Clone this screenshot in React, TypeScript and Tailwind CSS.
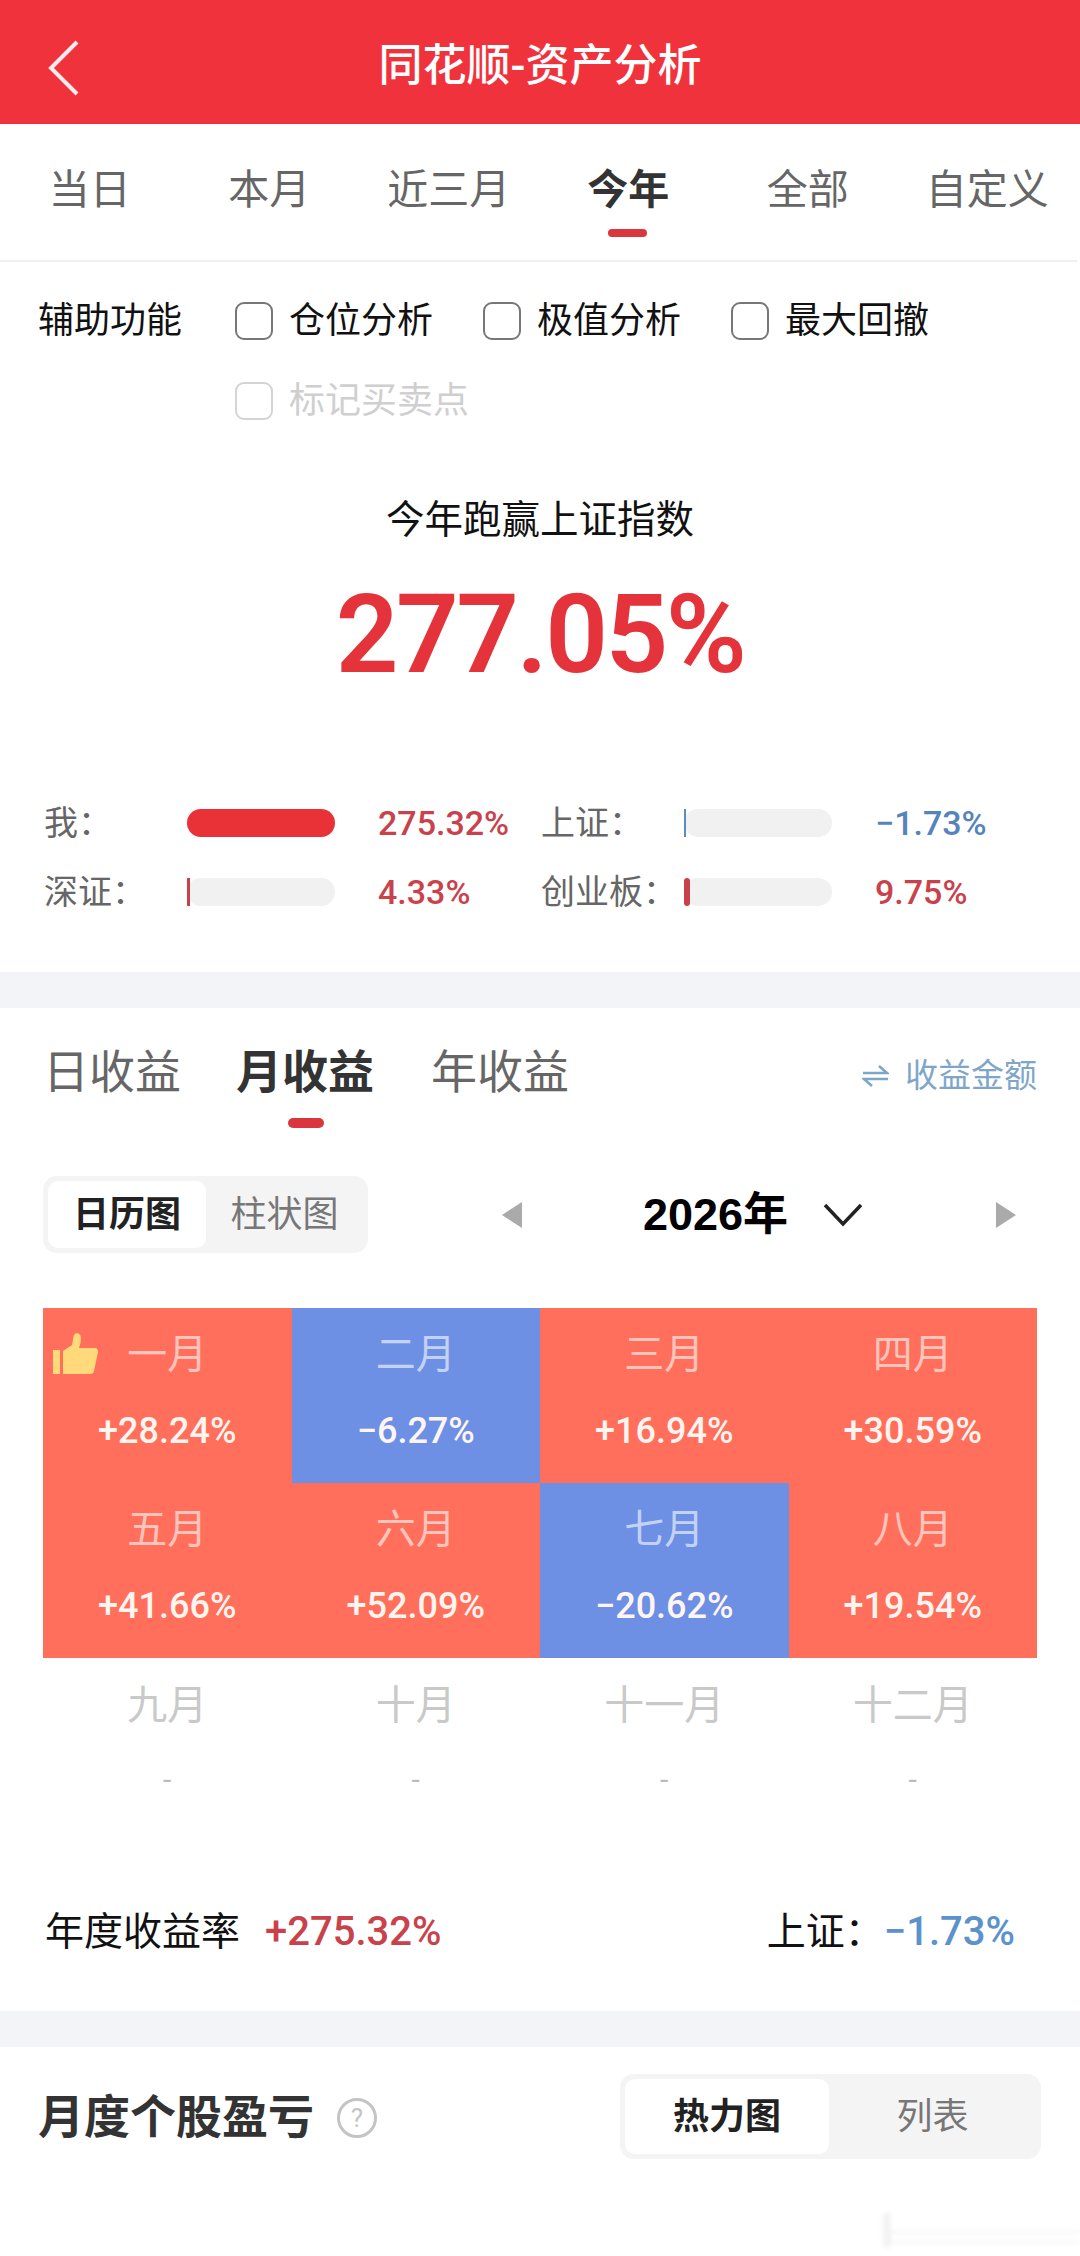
// @ts-nocheck
const font = 'font-["Roboto","Noto_Sans_CJK_SC",sans-serif]';

const periods = ['当日', '本月', '近三月', '今年', '全部', '自定义'];

const months = [
  { name: '一月', value: '+28.24%', tone: 'up', best: true },
  { name: '二月', value: '−6.27%', tone: 'down' },
  { name: '三月', value: '+16.94%', tone: 'up' },
  { name: '四月', value: '+30.59%', tone: 'up' },
  { name: '五月', value: '+41.66%', tone: 'up' },
  { name: '六月', value: '+52.09%', tone: 'up' },
  { name: '七月', value: '−20.62%', tone: 'down' },
  { name: '八月', value: '+19.54%', tone: 'up' },
  { name: '九月', value: '-', tone: 'none' },
  { name: '十月', value: '-', tone: 'none' },
  { name: '十一月', value: '-', tone: 'none' },
  { name: '十二月', value: '-', tone: 'none' },
];

function Check({ label, off }) {
  return (
    <div className="flex items-center gap-[16px]">
      <span className={`w-[38px] h-[38px] rounded-[9px] border-2 ${off ? 'border-[#d4d4d4]' : 'border-[#777]'}`} />
      <span className={`text-[36px] leading-[44px] ${off ? 'text-[#cfcfcf]' : 'text-[#111]'}`}>{label}</span>
    </div>
  );
}

function Stat({ label, value, fill, color, textColor }) {
  return (
    <div className="flex items-center h-[40px]">
      <span className="w-[143px] text-[34px] leading-[40px] text-[#666] whitespace-nowrap">{label}</span>
      <div className="relative w-[148px] h-[28px] rounded-full bg-[#f1f1f1]">
        <div className={`absolute left-0 top-0 bottom-0 ${color}`} style={{ width: fill }} />
      </div>
      <span className={`ml-[43px] text-[34px] leading-[40px] font-medium ${textColor}`}>{value}</span>
    </div>
  );
}

function Segment({ a, b, outer, inner }) {
  return (
    <div className={`flex p-[5px] rounded-[14px] bg-[#f4f4f5] ${outer}`}>
      <div className={`flex items-center justify-center rounded-[10px] bg-white font-bold text-[36px] text-[#222] ${inner}`}>{a}</div>
      <div className="flex-1 flex items-center justify-center text-[36px] text-[#777]">{b}</div>
    </div>
  );
}

export default function App() {
  return (
    <div className={`relative w-[1080px] h-[2256px] bg-white overflow-hidden ${font}`}>
      <header className="relative h-[124px] bg-[#f0323c] flex items-center justify-center">
        <svg className="absolute left-[46px] top-[39px]" width="36" height="58" viewBox="0 0 36 58" fill="none">
          <path d="M31 3 L5 29 L31 55" stroke="#fff" strokeWidth="4" opacity="0.9" />
        </svg>
        <h1 className="mt-[8px] text-[44px] leading-[56px] font-medium text-[#fff]">同花顺-资产分析</h1>
      </header>

      <nav className="h-[138px] border-b-2 border-[#f0f0f0] grid grid-cols-6 pt-[41px] w-[1077px]">
        {periods.map((p) => (
          <div key={p} className="relative flex justify-center">
            <span className={`text-[41px] leading-[50px] ${p === '今年' ? 'font-bold text-[#333]' : 'text-[#666]'}`}>{p}</span>
            {p === '今年' && <span className="absolute left-[69px] top-[64px] w-[39px] h-[8px] rounded-full bg-[#d9363e]" />}
          </div>
        ))}
      </nav>

      <section className="h-[710px] pt-[36px]">
        <div className="flex items-center h-[46px] pl-[38px]">
          <span className="w-[197px] text-[36px] leading-[44px] text-[#111]">辅助功能</span>
          <div className="flex gap-[50px]">
            <Check label="仓位分析" />
            <Check label="极值分析" />
            <Check label="最大回撤" />
          </div>
        </div>
        <div className="pl-[235px] mt-[35px]">
          <Check label="标记买卖点" off />
        </div>
        <p className="mt-[72px] text-center text-[38.5px] leading-[50px] text-[#111]">今年跑赢上证指数</p>
        <p className="mt-[26px] text-center text-[110px] leading-[128px] font-semibold tracking-[-2.6px] text-[#e5333b]">277.05%</p>
        <div className="mt-[104px] pl-[44px] grid grid-cols-[497px_1fr] gap-y-[29px]">
          <Stat label="我：" value="275.32%" fill="100%" color="bg-[#e93138] rounded-full" textColor="text-[#c9424b]" />
          <Stat label="上证：" value="−1.73%" fill="2px" color="bg-[#5b8cc0]" textColor="text-[#5584bd]" />
          <Stat label="深证：" value="4.33%" fill="3px" color="bg-[#c9424b]" textColor="text-[#c9424b]" />
          <Stat label="创业板：" value="9.75%" fill="6px" color="bg-[#c9424b] rounded-[3px]" textColor="text-[#c9424b]" />
        </div>
      </section>

      <div className="h-[36px] bg-[#f2f4f8]" />

      <section className="h-[1003px] pt-[36px]">
        <div className="relative flex items-center h-[56px] pl-[43px]">
          <span className="text-[46px] leading-[56px] text-[#666]">日收益</span>
          <span className="ml-[55px] text-[46px] leading-[56px] font-bold text-[#333]">月收益</span>
          <span className="ml-[57px] text-[46px] leading-[56px] text-[#666]">年收益</span>
          <span className="absolute left-[288px] top-[74px] w-[36px] h-[10px] rounded-full bg-[#d9363e]" />
          <div className="ml-auto mr-[43px] mt-[8px] flex items-center gap-[16px] text-[33px] leading-[44px] text-[#7fa6c9]">
            <svg width="27" height="26" viewBox="0 0 27 26" fill="none" stroke="#7fa6c9" strokeWidth="2.5">
              <path d="M1 10 H25 L17 3" />
              <path d="M26 16 H2 L10 23" />
            </svg>
            收益金额
          </div>
        </div>

        <div className="flex items-center mt-[76px] h-[77px] pl-[43px]">
          <Segment a="日历图" b="柱状图" outer="w-[325px] h-[77px]" inner="w-[158px]" />
          <svg className="ml-[134px]" width="20" height="26" viewBox="0 0 20 26" fill="#aaa">
            <path d="M20 0 V26 L0 13 Z" />
          </svg>
          <span className="ml-[121px] w-[180px] text-[45px] leading-[56px] font-bold text-black font-['Liberation_Sans','Noto_Sans_CJK_SC',sans-serif]">2026年</span>
          <svg width="40" height="24" viewBox="0 0 40 24" fill="none" stroke="#222" strokeWidth="3.5">
            <path d="M2 2 L20 21 L38 2" />
          </svg>
          <svg className="ml-[133px]" width="20" height="26" viewBox="0 0 20 26" fill="#aaa">
            <path d="M0 0 V26 L20 13 Z" />
          </svg>
        </div>

        <div className="mx-[43px] mt-[55px] grid grid-cols-4 auto-rows-[175px]">
          {months.map((m) => (
            <div
              key={m.name}
              className={`relative flex flex-col items-center pt-[23px] ${m.tone === 'up' ? 'bg-[#ff6f5b]' : m.tone === 'down' ? 'bg-[#6d90e5]' : ''}`}
            >
              {m.best && (
                <svg className="absolute left-[10px] top-[25px]" width="45" height="41" viewBox="0 0 45 41" fill="#ffd97a">
                  <rect x="0" y="17" width="7" height="24" />
                  <path d="M10 18 L19 12 C20 8 20 4 21 2 C23 -1 28 0 28 5 C28 9 27 12 26 15 H42 C44 15 45 17 45 19 L41 38 C41 40 39 41 37 41 H10 Z" />
                </svg>
              )}
              <span className={`text-[40px] leading-[48px] ${m.tone === 'none' ? 'mt-[1px] text-[#c9c9c9]' : 'text-white/60'}`}>{m.name}</span>
              {m.tone === 'none' ? (
                <span className="mt-[30px] text-[30px] leading-[40px] text-[#bbb]">-</span>
              ) : (
                <span className="mt-[32px] text-[36px] leading-[40px] font-medium text-[#fff5f0]">{m.value}</span>
              )}
            </div>
          ))}
        </div>

        <div className="flex items-center justify-between h-[48px] mt-[75px] pl-[45px] pr-[65px] text-[39px] leading-[48px] text-[#111]">
          <div className="flex items-center gap-[25px]">
            <span>年度收益率</span>
            <span className="text-[40px] font-medium text-[#c9424b]">+275.32%</span>
          </div>
          <div className="flex items-center">
            <span>上证：</span>
            <span className="text-[40px] font-medium text-[#5b92cc]">−1.73%</span>
          </div>
        </div>
      </section>

      <div className="h-[36px] bg-[#f3f4f8]" />

      <section className="flex items-start pt-[27px] pl-[38px]">
        <div className="flex items-center h-[85px]">
          <h2 className="text-[46px] leading-[56px] font-bold text-[#333]">月度个股盈亏</h2>
          <span className="ml-[23px] mt-[2px] flex items-center justify-center w-[40px] h-[40px] rounded-full border-[3px] border-[#c4c4c4] text-[26px] leading-none text-[#c4c4c4]">?</span>
        </div>
        <Segment a="热力图" b="列表" outer="ml-[243px] w-[421px] h-[85px]" inner="w-[204px]" />
      </section>

      <svg className="absolute left-[860px] top-[2205px] blur-[2px]" width="220" height="48" viewBox="0 0 220 48" fill="#dcdcdc" opacity="0.35">
        <rect x="23" y="8" width="8" height="34" />
        <rect x="30" y="26" width="190" height="2" />
        <rect x="30" y="36" width="190" height="2" />
      </svg>
    </div>
  );
}
